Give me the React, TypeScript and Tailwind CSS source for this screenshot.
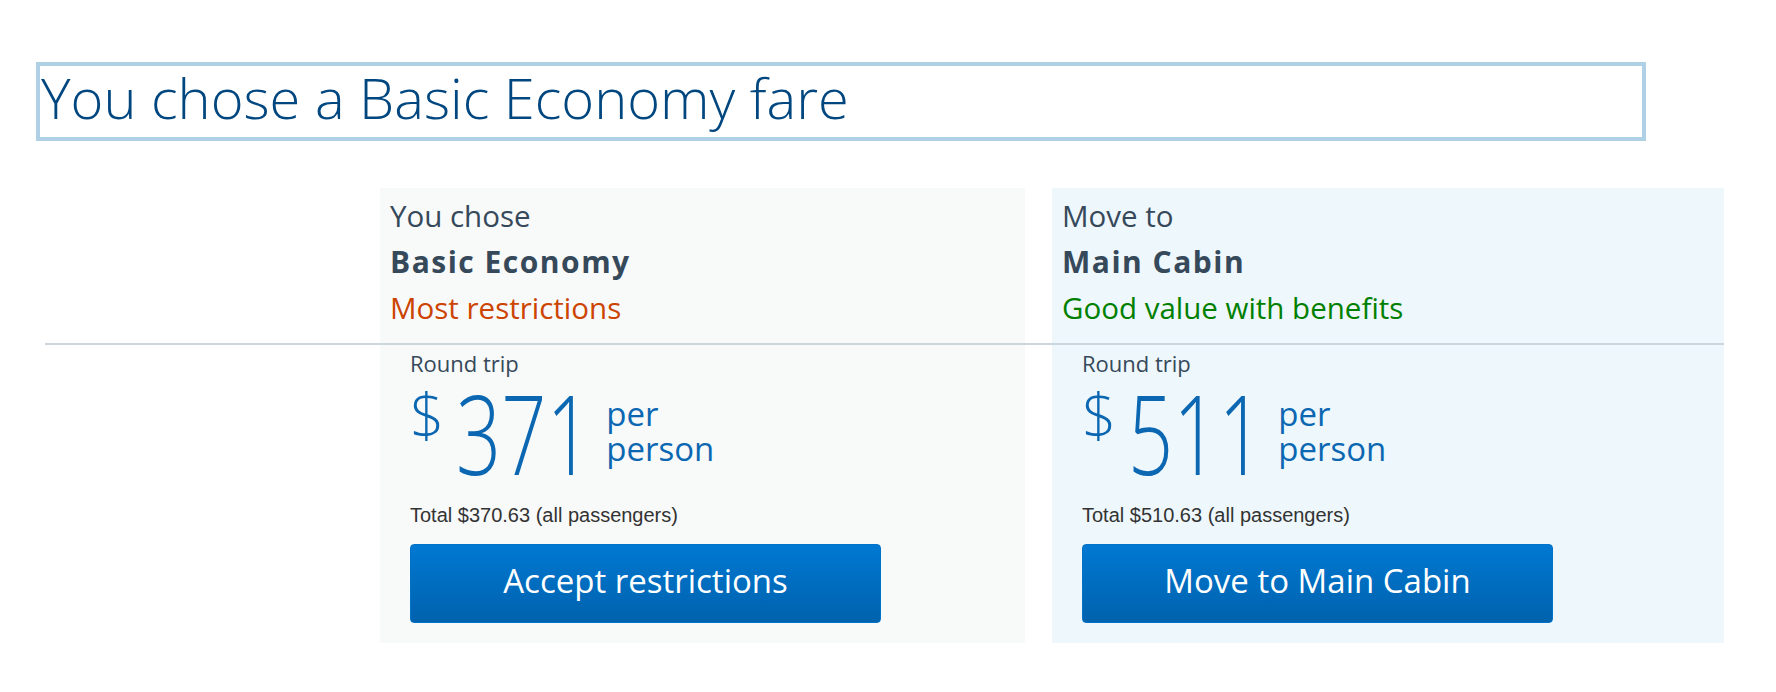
import React from 'react';

const OPEN = "font-['Open_Sans',sans-serif]";

function CardHead({
  lead,
  title,
  note,
  noteClass,
  bg,
}: {
  lead: string;
  title: string;
  note: string;
  noteClass: string;
  bg: string;
}) {
  return (
    <div className={`${bg} h-[155px] pl-[10px] pt-[5px] text-[29.5px] leading-[46px] text-[#36495a]`}>
      <p>{lead}</p>
      <p className="text-[30px] font-bold tracking-[0.05em]">{title}</p>
      <p className={noteClass}>{note}</p>
    </div>
  );
}

function CardBody({
  amount,
  total,
  action,
  bg,
}: {
  amount: string;
  total: string;
  action: string;
  bg: string;
}) {
  return (
    <div className={`${bg} h-[298px] pl-[30px] pt-[5px]`}>
      <p className="text-[22px] leading-[26px] text-[#36495a]">Round trip</p>

      <div className="mt-[4px] flex h-[109px] items-start text-[#0b67b2]">
        <span className="mt-[5px] text-[60px] font-light leading-[60px]">$</span>
        <span className="ml-[12px] w-[124px] whitespace-nowrap text-[110px] font-light leading-[104px]">
          <span className="inline-block origin-left scale-x-[0.72]">{amount}</span>
        </span>
        <span className="ml-[26px] mt-[16px] text-[33px] leading-[35px]">
          per
          <br />
          person
        </span>
      </div>

      <p className="mt-[14px] font-['Liberation_Sans',Arial,sans-serif] text-[20px] leading-[24px] text-[#333333]">
        {total}
      </p>

      <button
        type="button"
        className="mt-[17px] flex h-[79px] w-[471px] items-center justify-center rounded-[4px] border border-[#0072c8] bg-gradient-to-b from-[#0078d2] to-[#0062ad] pb-[6px] text-[33px] text-white"
      >
        {action}
      </button>
    </div>
  );
}

export default function App() {
  return (
    <div className={`${OPEN} min-h-[692px] bg-white pt-[62px]`}>
      <div className="ml-[36px] h-[79px] w-[1610px] border-4 border-[#b0d0e6] pl-px">
        <h1 className="text-[56px] font-light leading-[62px] text-[#00467f]">
          You chose a Basic Economy fare
        </h1>
      </div>

      <div className="ml-[45px] mt-[47px] w-[1679px]">
        <div className="flex">
          <div className="w-[335px]" />
          <div className="w-[645px]">
            <CardHead
              lead="You chose"
              title="Basic Economy"
              note="Most restrictions"
              noteClass="text-[#cc4400]"
              bg="bg-[#f8f9f9]"
            />
          </div>
          <div className="ml-[27px] w-[672px]">
            <CardHead
              lead="Move to"
              title="Main Cabin"
              note="Good value with benefits"
              noteClass="text-[#008000]"
              bg="bg-[#eef7fb]"
            />
          </div>
        </div>

        <div className="h-[2px] bg-[#ccd6df]" />

        <div className="flex">
          <div className="w-[335px]" />
          <div className="w-[645px]">
            <CardBody
              amount="371"
              total="Total $370.63 (all passengers)"
              action="Accept restrictions"
              bg="bg-[#f8f9f9]"
            />
          </div>
          <div className="ml-[27px] w-[672px]">
            <CardBody
              amount="511"
              total="Total $510.63 (all passengers)"
              action="Move to Main Cabin"
              bg="bg-[#eef7fb]"
            />
          </div>
        </div>
      </div>
    </div>
  );
}
